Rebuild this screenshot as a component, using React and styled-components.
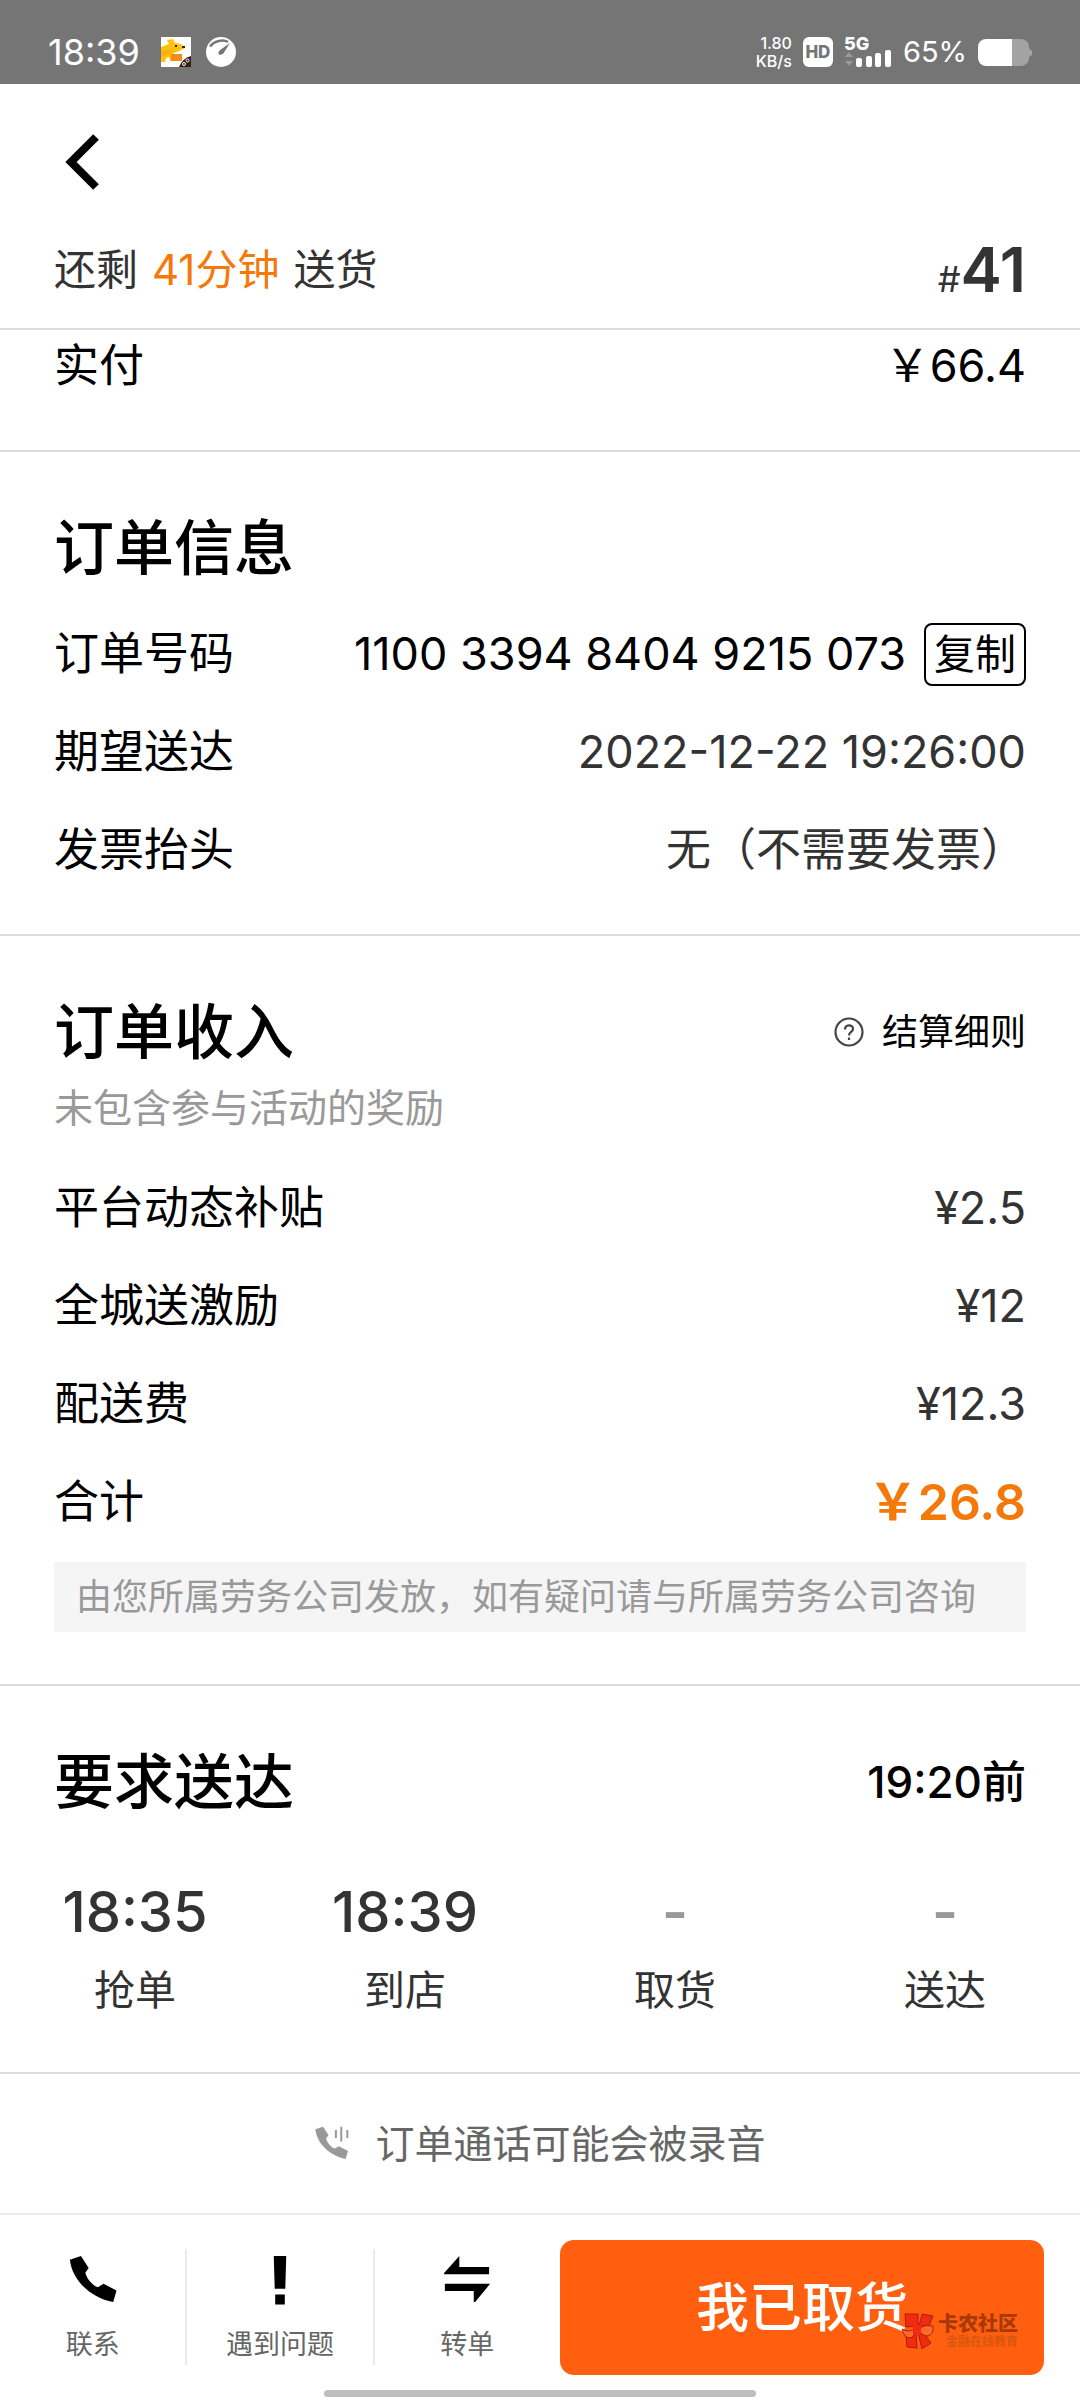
import React, { useState } from "react";
import styled, { createGlobalStyle } from "styled-components";

const GlobalStyle = createGlobalStyle`
  * {
    box-sizing: border-box;
  }

  body {
    margin: 0;
    background: #fff;
    color: #000;
    font-family: Inter, "Noto Sans CJK SC", sans-serif;
  }

  button {
    font-family: inherit;
    border: none;
    background: none;
    padding: 0;
    color: inherit;
    cursor: pointer;
  }

  h2, p, dl, dt, dd, ol {
    margin: 0;
    padding: 0;
    font-weight: 400;
  }
`;

const Page = styled.div`
  min-height: 100vh;
  display: flex;
  flex-direction: column;
`;

const StatusBar = styled.header`
  display: flex;
  align-items: center;
  justify-content: space-between;
  height: 84px;
  padding: 20px 48px 0;
  background: #757575;
  color: #fff;
`;

const StatusGroup = styled.div`
  display: flex;
  align-items: center;
  gap: ${({ $gap }) => $gap}px;
`;

const Clock = styled.span`
  font-size: 36px;
  line-height: 40px;
  margin-right: 6px;
`;

const NetSpeed = styled.span`
  display: flex;
  flex-direction: column;
  align-items: flex-end;
  font-size: 16px;
  font-weight: 500;
  line-height: 18px;
`;

const HdBadge = styled.span`
  width: 30px;
  height: 30px;
  border-radius: 6px;
  background: #fff;
  color: #757575;
  font-size: 17px;
  font-weight: 800;
  line-height: 30px;
  text-align: center;
`;

const Signal = styled.span`
  display: flex;
  flex-direction: column;
  width: 48px;
  height: 32px;
  font-size: 18px;
  font-weight: 800;
  line-height: 16px;
`;

const SignalBars = styled.svg`
  display: block;
  margin-top: -2px;
`;

const Battery = styled.span`
  font-size: 29px;
  line-height: 32px;
`;

const NavBar = styled.nav`
  display: flex;
  align-items: center;
  height: 156px;
  padding: 0 56px;
`;

const BackButton = styled.button`
  display: flex;
  padding: 8px;
`;

const Summary = styled.div`
  display: flex;
  align-items: center;
  justify-content: space-between;
  padding: 0 54px 28px;
  border-bottom: 2px solid #dcdcdc;
  font-size: 42px;
  line-height: 60px;
  color: #333;
`;

const Remaining = styled.span`
  color: #f5780a;
  margin: 0 14px;
`;

const OrderIndex = styled.span`
  display: flex;
  align-items: baseline;
  height: 60px;
  font-size: 62px;
  font-weight: 600;

  small {
    font-size: 36px;
    font-weight: 400;
  }
`;

const Section = styled.section`
  padding: ${({ $tight }) => ($tight ? 4 : 56)}px 54px 52px;
  border-bottom: 2px solid #dcdcdc;
`;

const SectionHead = styled.div`
  display: flex;
  align-items: center;
  justify-content: space-between;
`;

const Title = styled.h2`
  font-size: 60px;
  font-weight: 500;
  line-height: 80px;
`;

const Subtitle = styled.p`
  margin-top: 8px;
  font-size: 39px;
  line-height: 56px;
  color: #999;
`;

const RulesLink = styled.a`
  display: flex;
  align-items: center;
  gap: 18px;
  font-size: 36px;
  line-height: 56px;
  color: #000;
  text-decoration: none;
`;

const Rows = styled.dl`
  display: flex;
  flex-direction: column;
  gap: 34px;
  margin-top: ${({ $top }) => $top || 0}px;
`;

const Row = styled.div`
  display: flex;
  align-items: center;
  justify-content: space-between;
  font-size: 45px;
  line-height: 64px;
`;

const Value = styled.dd`
  display: flex;
  align-items: center;
  gap: 18px;
  color: ${({ $color }) => $color || "#333"};
  font-size: ${({ $total }) => ($total ? 50 : 45)}px;
  font-weight: ${({ $total }) => ($total ? 600 : 400)};
`;

const CopyButton = styled.button`
  height: 63px;
  padding: 0 8px;
  border: 2px solid #000;
  border-radius: 8px;
  font-size: 41px;
  line-height: 56px;
`;

const Notice = styled.p`
  margin-top: 28px;
  padding: 0 22px;
  background: #f5f5f5;
  font-size: 36px;
  line-height: 70px;
  color: #999;
`;

const Deadline = styled.span`
  font-size: 44px;
  font-weight: 500;
  line-height: 64px;
`;

const Steps = styled.ol`
  display: grid;
  grid-template-columns: repeat(4, 1fr);
  margin: 54px -54px 0;
  list-style: none;
`;

const Step = styled.li`
  display: flex;
  flex-direction: column;
  align-items: center;
  gap: 12px;
  font-size: 41px;
  line-height: 60px;
  color: #333;
`;

const StepTime = styled.span`
  font-size: 56px;
  font-weight: ${({ $pending }) => ($pending ? 600 : 500)};
  line-height: 72px;
  color: ${({ $pending }) => ($pending ? "#999" : "#333")};
`;

const CallHint = styled.p`
  display: flex;
  align-items: center;
  justify-content: center;
  gap: 26px;
  font-size: 39px;
  line-height: 139px;
  color: #666;
`;

const BottomBar = styled.footer`
  position: relative;
  display: flex;
  align-items: flex-start;
  flex: 1;
  min-height: 187px;
  padding: 25px 36px 0 0;
  border-top: 2px solid #ebebeb;
`;

const Actions = styled.div`
  display: flex;
  flex: 560;
  padding-top: 9px;
`;

const Action = styled.button`
  display: flex;
  flex: 1;
  flex-direction: column;
  align-items: center;
  gap: 20px;
  height: 116px;
  padding-top: 6px;
  font-size: 27px;
  line-height: 40px;
  color: #666;

  & + & {
    border-left: 2px solid #ebebeb;
  }
`;

const PickedUpButton = styled.button`
  flex: 484;
  height: 135px;
  border-radius: 14px;
  background: #ff5f0f;
  color: #fff;
  font-size: 53px;
  font-weight: 500;
  line-height: 64px;
`;

const Watermark = styled.div`
  position: absolute;
  right: 62px;
  top: 98px;
  display: flex;
  align-items: center;
  gap: 4px;
  color: #a83808;
  font-size: 20px;
  font-weight: 900;
  line-height: 22px;
  pointer-events: none;

  small {
    display: block;
    color: #d9560f;
    font-size: 12px;
    font-weight: 700;
    line-height: 14px;
    text-align: right;
  }
`;

const HomeIndicator = styled.div`
  position: absolute;
  left: 30%;
  right: 30%;
  bottom: 3px;
  height: 7px;
  border-radius: 4px;
  background: #bfbfbf;
`;

const HANDSET =
  "M2 5 L13.5 1 L21.5 13.5 L18 18.5 C19.5 25 26 32 31 33.5 L37 30 L50.5 37 L47 49 C22 44 4 25 2 5Z";

const KangarooIcon = () => (
  <svg width="30" height="30" viewBox="0 0 30 30" aria-hidden="true">
    <rect width="30" height="30" fill="#fff" />
    <path
      d="M0 10 L8 7 L6 3 L12 2 L14 6 L20 7 L24 11 L18 14 L13 16 L11 20 L20 22 L19 24 L9 24 L8 20 L5 21 L4 25 L0 25Z"
      fill="#fdc30b"
    />
    <path d="M0 13 L12 13 L9 17 L0 20Z" fill="#fbb00d" />
    <rect x="10" y="17" width="11" height="7" fill="#f58a1c" />
    <rect x="14" y="8" width="2" height="2" fill="#3b1d14" />
    <rect x="21" y="9" width="3" height="2" fill="#3b1d14" />
    <path d="M30 19 A18 18 0 0 0 18 30 H30Z" fill="#3b1d14" />
    <circle cx="23" cy="27" r="1.5" fill="none" stroke="#fff" />
    <circle cx="26.5" cy="23.5" r="1.5" fill="none" stroke="#fff" />
  </svg>
);

const GaugeIcon = () => (
  <svg width="30" height="30" viewBox="0 0 30 30" aria-hidden="true">
    <circle cx="15" cy="15" r="15" fill="#fff" />
    <path d="M4 9.5 C8 4 17 2 22 5" fill="none" stroke="#757575" strokeWidth="2.5" />
    <path d="M24 6 L18 15.5 C16.5 18 13 18.5 12.5 16.5 C12 14.5 14 13 15.5 12Z" fill="#757575" />
  </svg>
);

const BatteryIcon = () => (
  <svg width="54" height="27" viewBox="0 0 54 27" aria-hidden="true">
    <path d="M34 0 H43 A8 8 0 0 1 51 8 V9 L54 12 V16 L51 18 V19 A8 8 0 0 1 43 27 H34Z" fill="#a3a3a3" />
    <path d="M8 0 H34 V27 H8 A8 8 0 0 1 0 19 V8 A8 8 0 0 1 8 0Z" fill="#fff" />
  </svg>
);

const HelpIcon = () => (
  <svg width="30" height="30" viewBox="0 0 30 30" fill="none" stroke="#444" strokeWidth="2.2" aria-hidden="true">
    <circle cx="15" cy="15" r="13.5" />
    <path d="M11 12.5 C11 7 19 7 19 12 C19 15 15 15 15 18.5" />
    <path d="M15 20.5 V23" />
  </svg>
);

const PinwheelLogo = () => (
  <svg width="33" height="36" viewBox="0 0 33 36" stroke="#a52208" strokeWidth="1" aria-hidden="true">
    <path d="M4 1 L17 1 L17 13 L5 14Z" fill="#f22a12" />
    <path d="M21 1 L32 3 L28 13 L18 13Z" fill="#f22a12" />
    <path d="M5 23 L15 20 L16 35 L6 34Z" fill="#f22a12" />
    <path d="M17 20 L24 22 L30 30 L21 36Z" fill="#f22a12" />
    <path d="M1 16 Q7 20 14 16 Q15 24 8 25 Q3 24 1 16Z" fill="#ff6a2a" />
    <path d="M18 15 Q25 11 32 13 Q33 21 27 23 Q19 23 18 15Z" fill="#ff6a2a" />
    <path d="M12 12 H20 V22 H12Z" fill="#f22a12" stroke="none" />
  </svg>
);

const orderInfo = [
  { label: "订单号码", value: "1100 3394 8404 9215 073", copy: true },
  { label: "期望送达", value: "2022-12-22 19:26:00" },
  { label: "发票抬头", value: "无（不需要发票）" },
];

const income = [
  { label: "平台动态补贴", value: "¥2.5" },
  { label: "全城送激励", value: "¥12" },
  { label: "配送费", value: "¥12.3" },
  { label: "合计", value: "￥26.8", total: true },
];

const steps = [
  { label: "抢单", time: "18:35" },
  { label: "到店", time: "18:39" },
  { label: "取货", time: null },
  { label: "送达", time: null },
];

const App = () => {
  const [copied, setCopied] = useState(false);

  const copyNumber = () => {
    navigator.clipboard?.writeText(orderInfo[0].value.replace(/ /g, ""));
    setCopied(true);
  };

  return (
    <Page>
      <GlobalStyle />
      <StatusBar>
        <StatusGroup $gap={15}>
          <Clock>18:39</Clock>
          <KangarooIcon />
          <GaugeIcon />
        </StatusGroup>
        <StatusGroup $gap={11}>
          <NetSpeed>
            <span>1.80</span>
            <span>KB/s</span>
          </NetSpeed>
          <HdBadge>HD</HdBadge>
          <Signal>
            5G
            <SignalBars width="48" height="17" viewBox="0 0 48 17" aria-hidden="true">
              <path d="M5 2 L9 7 H1Z M5 16 L9 11 H1Z" fill="#999" />
              <rect x="12" y="8" width="6" height="9" rx="2" fill="#fff" />
              <rect x="22" y="6" width="6" height="11" rx="2" fill="#fff" />
              <rect x="31" y="3" width="6" height="14" rx="2" fill="#fff" />
              <rect x="41" y="0" width="6" height="17" rx="2" fill="#fff" />
            </SignalBars>
          </Signal>
          <Battery>65%</Battery>
          <BatteryIcon />
        </StatusGroup>
      </StatusBar>

      <NavBar>
        <BackButton type="button" aria-label="返回">
          <svg width="36" height="58" viewBox="0 0 36 58" fill="none" stroke="#000" strokeWidth="8">
            <path d="M32 4 L7 29 L32 54" />
          </svg>
        </BackButton>
      </NavBar>

      <Summary>
        <span>
          还剩<Remaining>41分钟</Remaining>送货
        </span>
        <OrderIndex>
          <small>#</small>41
        </OrderIndex>
      </Summary>

      <Section $tight>
        <Rows>
          <Row>
            <dt>实付</dt>
            <Value $color="#000">￥66.4</Value>
          </Row>
        </Rows>
      </Section>

      <Section>
        <Title>订单信息</Title>
        <Rows $top={34}>
          {orderInfo.map(({ label, value, copy }) => (
            <Row key={label}>
              <dt>{label}</dt>
              <Value $color={copy && "#000"}>
                {value}
                {copy && (
                  <CopyButton type="button" onClick={copyNumber} aria-pressed={copied}>
                    复制
                  </CopyButton>
                )}
              </Value>
            </Row>
          ))}
        </Rows>
      </Section>

      <Section>
        <SectionHead>
          <Title>订单收入</Title>
          <RulesLink href="#rules">
            <HelpIcon />
            结算细则
          </RulesLink>
        </SectionHead>
        <Subtitle>未包含参与活动的奖励</Subtitle>
        <Rows $top={40}>
          {income.map(({ label, value, total }) => (
            <Row key={label}>
              <dt>{label}</dt>
              <Value $total={total} $color={total && "#f5780a"}>
                {value}
              </Value>
            </Row>
          ))}
        </Rows>
        <Notice>由您所属劳务公司发放，如有疑问请与所属劳务公司咨询</Notice>
      </Section>

      <Section>
        <SectionHead>
          <Title>要求送达</Title>
          <Deadline>19:20前</Deadline>
        </SectionHead>
        <Steps>
          {steps.map(({ label, time }) => (
            <Step key={label}>
              <StepTime $pending={!time}>{time || "-"}</StepTime>
              {label}
            </Step>
          ))}
        </Steps>
      </Section>

      <CallHint>
        <svg width="35" height="35" viewBox="0 0 52 52" fill="#999" aria-hidden="true">
          <path d={HANDSET} />
          <path d="M31 6 h3 v12 h-3Z M39 1 h3 v22 h-3Z M48 6 h3 v12 h-3Z" />
        </svg>
        订单通话可能会被录音
      </CallHint>

      <BottomBar>
        <Actions>
          <Action type="button">
            <svg width="52" height="52" viewBox="0 0 52 52" aria-hidden="true">
              <path d={HANDSET} fill="#000" />
            </svg>
            联系
          </Action>
          <Action type="button">
            <svg width="52" height="52" viewBox="0 0 52 52" aria-hidden="true">
              <path d="M19.5 1 H32.5 L31.5 35 H20.5Z M21 41 H31 V51.5 H21Z" fill="#000" />
            </svg>
            遇到问题
          </Action>
          <Action type="button">
            <svg width="52" height="52" viewBox="0 0 52 52" aria-hidden="true">
              <path
                d="M2 19 L18 1 V12.5 H49 V20 H2Z M3 30 H50 L34.5 49 H33 V37.5 H3Z"
                fill="#000"
              />
            </svg>
            转单
          </Action>
        </Actions>
        <PickedUpButton type="button">我已取货</PickedUpButton>
        <Watermark>
          <PinwheelLogo />
          <div>
            卡农社区
            <small>金融在线教育</small>
          </div>
        </Watermark>
        <HomeIndicator />
      </BottomBar>
    </Page>
  );
};

export default App;
